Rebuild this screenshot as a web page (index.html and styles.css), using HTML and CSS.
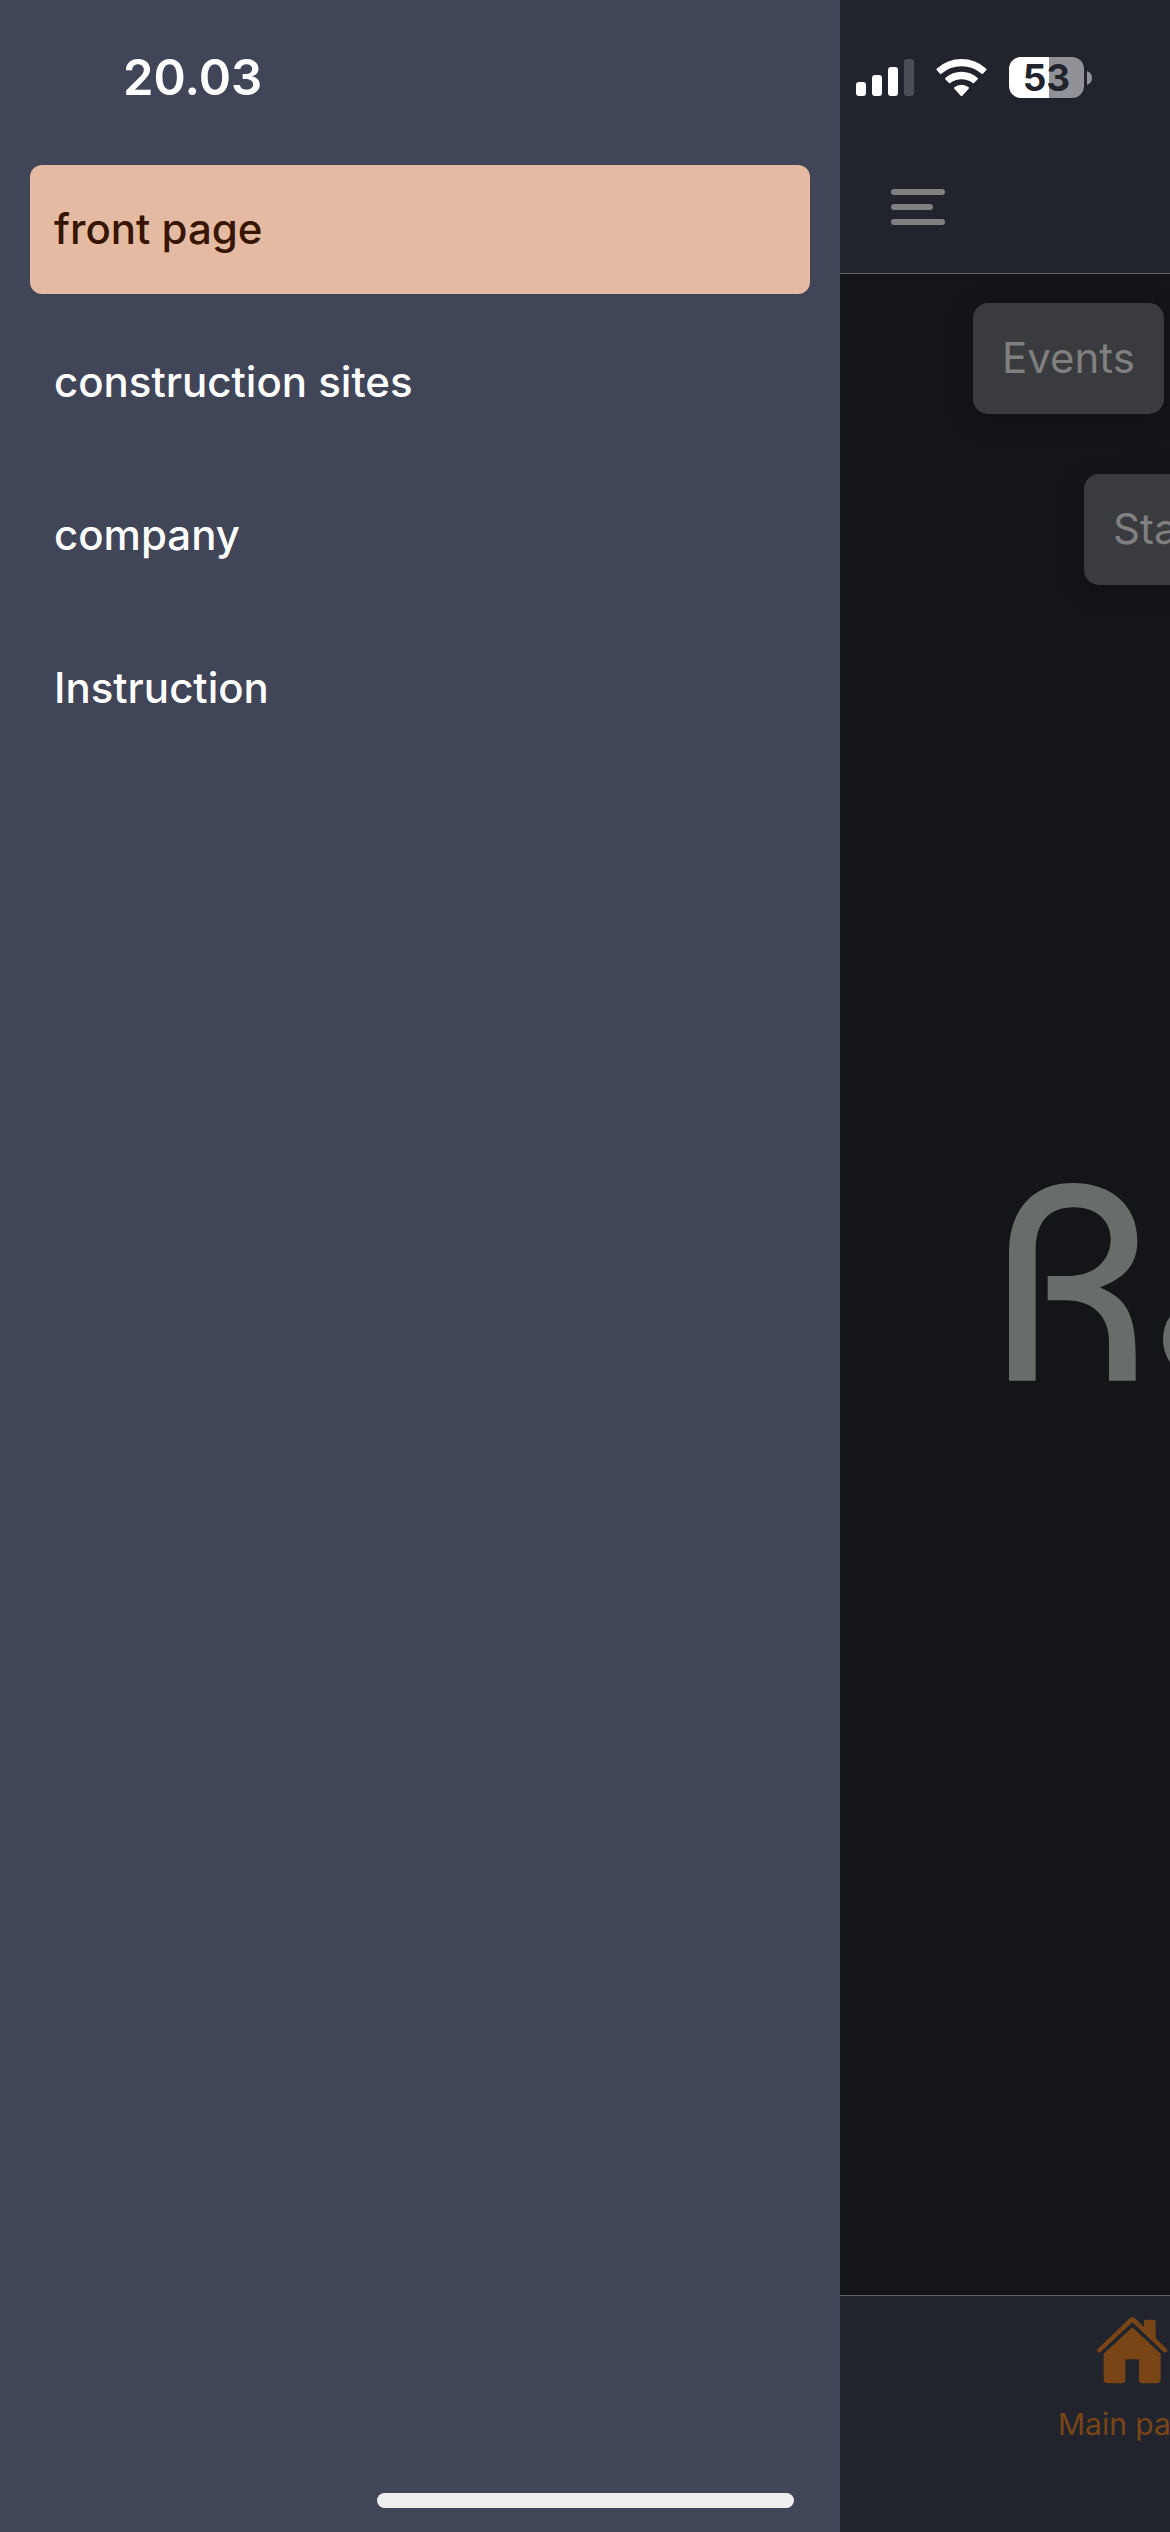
FILE: index.html
```html
<!DOCTYPE html>
<html lang="en">
<head>
<meta charset="utf-8">
<meta name="viewport" content="width=device-width">
<title>Front page</title>
<link rel="stylesheet" href="styles.css">
</head>
<body>
<div class="app">
  <aside class="drawer">
    <div class="status status-left"><time class="clock">20.03</time></div>
    <nav class="menu">
      <a class="menu-item active" href="#front">front page</a>
      <a class="menu-item" href="#sites">construction sites</a>
      <a class="menu-item" href="#company">company</a>
      <a class="menu-item" href="#instruction">Instruction</a>
    </nav>
  </aside>
  <div class="page">
    <header class="header">
      <div class="status status-right">
        <svg class="signal" width="58" height="38" viewBox="0 0 58 38" aria-hidden="true">
          <rect x="0" y="23" width="10" height="14" rx="3"/>
          <rect x="16" y="16" width="10" height="21" rx="3"/>
          <rect x="32" y="8" width="10" height="29" rx="3"/>
          <rect x="48" y="0" width="10" height="37" rx="3" fill="#4b4e56"/>
        </svg>
        <svg class="wifi" width="51" height="38" viewBox="0 0 153 114" aria-hidden="true">
          <path d="M2 33 Q0 31 2 29 Q34 0 76.500 0 Q119 0 151 29 Q153 31 151 33 L141 44 Q139 46 137 44 Q110 22 76.500 22 Q43 22 16 44 Q14 46 12 44Z"/>
          <path d="M28 61 Q26 59 28 57 Q49 38 76.500 38 Q104 38 125 57 Q127 59 125 61 L114 72 Q112 74 110 72 Q95 61 76.500 61 Q58 61 43 72 Q41 74 39 72Z"/>
          <path d="M55 89 Q53 87 55 85 Q64 77 76.500 77 Q89 77 98 85 Q100 87 98 89 L79 110 Q76.500 112 74 110Z"/>
        </svg>
        <div class="battery"><span class="battery-level">53</span><svg width="5" height="14" viewBox="0 0 5 14" aria-hidden="true"><path d="M0 0 Q5 2 5 7 Q5 12 0 14Z" fill="#919297"/></svg></div>
      </div>
      <button class="menu-button" type="button" aria-label="Menu">
        <svg width="54" height="36" viewBox="0 0 54 36" fill="#808080" aria-hidden="true">
          <rect width="54" height="6" rx="3"/><rect y="15" width="42" height="6" rx="3"/><rect y="30" width="54" height="6" rx="3"/>
        </svg>
      </button>
    </header>
    <main class="content">
      <div class="actions">
        <button class="action" type="button">Events</button>
        <button class="action action-inset" type="button">Status</button>
      </div>
      <svg class="logo" width="270" height="198" viewBox="88 98 810 594" fill="#676e69" aria-hidden="true">
        <path d="M88 691V308C88 180 158 98 280 98C398 98 473 168 473 272C473 345 432 385 360 411C440 445 468 490 468 620V691H388V570C388 500 340 450 260 450H204V377H265C345 377 393 330 393 266C393 210 348 171 282 171C208 171 168 215 168 300V691Z"/>
        <circle cx="671" cy="567" r="84" fill="none" stroke="#676e69" stroke-width="74"/>
      </svg>
    </main>
    <footer class="tabs">
      <a class="tab" href="#main">
        <svg width="71" height="67" viewBox="202 142 213 201" fill="#7a4516" aria-hidden="true">
          <path d="M343 172V157Q343 150 350 150H371Q378 150 378 157V206L411 238Q415 243 411 247Q407 251 402 247L308 158L213 247Q208 251 204 247Q200 242 204 238L300 146Q308 140 316 146Z"/>
          <path d="M308 173L393 252V328Q393 341 380 341H338Q328 341 328 331V269H287V331Q287 341 277 341H236Q222 341 222 328V252Z"/>
        </svg>
        <span>Main page</span>
      </a>
    </footer>
  </div>
</div>
<div class="home-indicator"></div>
</body>
</html>
```
FILE: styles.css
```css
* { box-sizing: border-box; }

body {
  margin: 0;
  font-family: Inter, "Liberation Sans", sans-serif;
  font-size: 42px;
  line-height: 51px;
  background: #141519;
}

a { text-decoration: none; }

button {
  font: inherit;
  border: 0;
  cursor: pointer;
}

svg { display: block; flex: none; }

.app {
  display: grid;
  grid-template-columns: minmax(0, 840px) minmax(0, 1fr);
  min-height: 100vh;
}

.status {
  display: flex;
  align-items: center;
  height: 155px;
}

/* Drawer */
.drawer { background: #414558; }

.status-left { padding-left: 123px; }

.clock {
  color: #fff;
  font-size: 49px;
  font-weight: 600;
}

.menu {
  display: flex;
  flex-direction: column;
  gap: 24px;
  padding: 10px 30px;
}

.menu-item {
  padding: 38px 24px 40px;
  border-radius: 12px;
  color: #fff;
  font-weight: 500;
}

.menu-item.active {
  background: #e4baa2;
  color: #371500;
}

/* Page behind the drawer */
.page {
  display: flex;
  flex-direction: column;
  overflow: hidden;
}

.header {
  height: 274px;
  background: #21242d;
  border-bottom: 1px solid #636467;
}

.status-right {
  gap: 22px;
  padding-left: 16px;
  fill: #fff;
}

.battery {
  display: flex;
  align-items: center;
  gap: 3px;
}

.battery-level {
  width: 75px;
  height: 41px;
  border-radius: 12px;
  background: linear-gradient(90deg, #fff 53%, #919297 53%);
  color: #21242d;
  font-size: 37px;
  font-weight: 700;
  line-height: 41px;
  text-align: center;
}

.menu-button {
  margin-left: 36px;
  padding: 34px 15px;
  background: none;
}

.content {
  display: grid;
  flex: 1;
  align-items: center;
}

.actions,
.logo { grid-area: 1 / 1; }

.actions {
  display: flex;
  flex-direction: column;
  align-self: start;
  align-items: flex-start;
  gap: 60px;
  padding: 29px 0 0 133px;
}

.action {
  padding: 29px 29px 31px;
  border-radius: 15px;
  background: #3a3b3f;
  box-shadow: 0 6px 24px rgba(0, 0, 0, 0.25);
  color: #808080;
}

.action-inset { margin-left: 111px; }

.logo {
  margin: 0 0 5px 169px;
}

.tabs {
  display: flex;
  height: 237px;
  padding: 21px 0 0 218px;
  background: #21242d;
  border-top: 1px solid #636467;
}

.tab {
  display: flex;
  flex-direction: column;
  align-items: center;
  gap: 22px;
  color: #7a4516;
  font-size: 30px;
  line-height: 36px;
  white-space: nowrap;
}

.home-indicator {
  position: fixed;
  bottom: 24px;
  left: calc(50% - 208px);
  width: 417px;
  height: 15px;
  border-radius: 8px;
  background: #eee;
}
```
